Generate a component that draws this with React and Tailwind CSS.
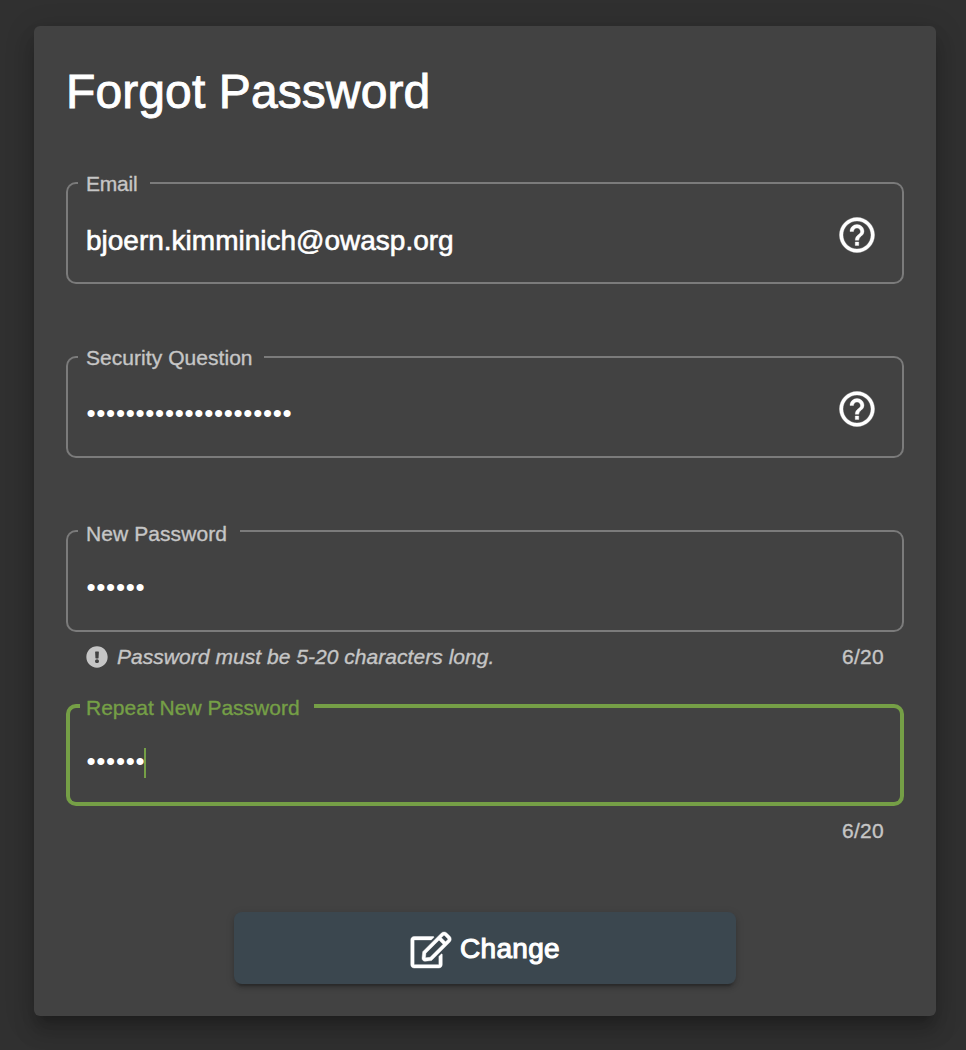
import { MdHelpOutline } from "react-icons/md";
import { FaRegEdit, FaExclamationCircle } from "react-icons/fa";

// Outlined text field: the border is split in three so the label sits in a notch.
function Field({ label, labelClass, notch, focused = false, help = false, hint, children }) {
  const line = focused ? "border-[#759f46]" : "border-[#7b7b7b]";
  return (
    <div className="h-[174px]">
      <div className="relative flex h-[102px] items-center justify-between pl-5 pr-[26px]">
        <div className="pointer-events-none absolute inset-0 flex">
          <div className={`${line} rounded-l-[10px] ${focused ? "w-3.5 border-y-4 border-l-4" : "w-3 border-y-2 border-l-2"}`} />
          <div className={`${line} ${notch} ${focused ? "border-b-4" : "border-b-2"}`} />
          <div className={`${line} flex-1 rounded-r-[10px] ${focused ? "border-y-4 border-r-4" : "border-y-2 border-r-2"}`} />
        </div>
        <label
          className={`absolute left-5 whitespace-nowrap text-[21px] leading-6 [-webkit-text-stroke:0.35px_currentColor] ${labelClass} ${
            focused ? "text-[#759f46]" : "text-[#c6c6c6]"
          }`}
        >
          {label}
        </label>
        {children}
        {help && (
          <MdHelpOutline className="mr-[0.3px] mt-1 size-[42px] text-white [&>path:last-child]:stroke-current [&>path:last-child]:stroke-[0.2]" />
        )}
      </div>
      {hint}
    </div>
  );
}

function Dots({ count }) {
  return (
    <span className="pl-[0.5px] text-[26px] leading-8 tracking-[0.7px] text-white">{"•".repeat(count)}</span>
  );
}

function Counter() {
  return <span className="text-[21px] tracking-[0.3px] [-webkit-text-stroke:0.35px_currentColor]">6/20</span>;
}

export default function App() {
  return (
    <div className="h-[1050px] bg-[#303030] px-[34px] pb-[34px] pt-[26px] font-['Liberation_Sans',Arial,sans-serif] antialiased">
      <main className="flex h-[990px] w-[902px] flex-col rounded-md bg-[#424242] px-8 pt-[38px] shadow-[0_10px_10px_-6px_rgba(0,0,0,0.2),0_16px_20px_2px_rgba(0,0,0,0.14),0_6px_28px_4px_rgba(0,0,0,0.12)]">
        <h1 className="mb-[62px] h-14 whitespace-nowrap text-[48px] leading-[56px] tracking-[0.1px] text-white [-webkit-text-stroke:0.9px_currentColor]">
          Forgot Password
        </h1>

        <Field label="Email" labelClass="top-[-10px] tracking-[-0.2px]" notch="w-[72px]" help>
          <span className="mt-4 text-[28px] leading-8 text-white [-webkit-text-stroke:0.6px_currentColor]">
            bjoern.kimminich@owasp.org
          </span>
        </Field>

        <Field label="Security Question" labelClass="top-[-10px] tracking-[0.05px]" notch="w-[186px]" help>
          <span className="mt-3 flex"><Dots count={21} /></span>
        </Field>

        <Field
          label="New Password"
          labelClass="top-[-8px] tracking-[0.08px]"
          notch="w-[162px]"
          hint={
            <div className="flex h-[50px] items-center justify-between px-5 text-[#c6c6c6]">
              <span className="flex items-center gap-[9px]">
                <FaExclamationCircle className="size-[22px]" />
                <em className="text-[21px] tracking-[0.04px] [-webkit-text-stroke:0.35px_currentColor]">
                  Password must be 5-20 characters long.
                </em>
              </span>
              <Counter />
            </div>
          }
        >
          <span className="mt-3 flex"><Dots count={6} /></span>
        </Field>

        <Field
          label="Repeat New Password"
          labelClass="top-[-8px]"
          notch="w-[234px]"
          focused
          hint={
            <div className="flex h-[50px] items-center justify-end px-5 text-[#c6c6c6]">
              <Counter />
            </div>
          }
        >
          <span className="mt-3 flex items-center">
            <Dots count={6} />
            <span className="-ml-px mt-1 h-[30px] w-0.5 bg-[#759f46]" />
          </span>
        </Field>

        <button className="mt-[34px] flex h-[72px] w-[502px] items-center justify-center gap-2 self-center rounded-lg bg-[#3b474f] pt-px text-white shadow-[0_6px_2px_-4px_rgba(0,0,0,0.2),0_4px_4px_rgba(0,0,0,0.14),0_2px_10px_rgba(0,0,0,0.12)]">
          <FaRegEdit className="mt-[3px] h-9 w-[42px] overflow-visible stroke-current stroke-[6]" />
          <span className="text-[28px] leading-8 tracking-[0.3px] [-webkit-text-stroke:1.1px_currentColor]">Change</span>
        </button>
      </main>
    </div>
  );
}
